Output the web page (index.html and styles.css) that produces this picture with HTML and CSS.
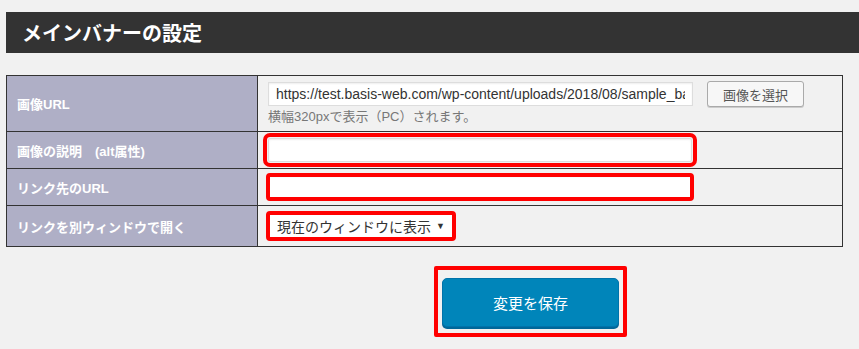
FILE: index.html
```html
<!DOCTYPE html>
<html lang="ja">
<head>
<meta charset="utf-8">
<title>メインバナーの設定</title>
<link rel="stylesheet" href="styles.css">
</head>
<body>
  <div class="wrap">
    <h2 class="section-title">メインバナーの設定</h2>

    <table class="form-table">
      <tr class="row-image">
        <th>画像URL</th>
        <td>
          <div class="url-line">
            <input type="text" class="text-url" value="https://test.basis-web.com/wp-content/uploads/2018/08/sample_banner.jpg">
            <button type="button" class="button">画像を選択</button>
          </div>
          <p class="note">横幅320pxで表示（PC）されます。</p>
        </td>
      </tr>
      <tr class="row-alt">
        <th>画像の説明　(alt属性)</th>
        <td><input type="text" class="text-wide mark mark-loose"></td>
      </tr>
      <tr class="row-link">
        <th>リンク先のURL</th>
        <td><input type="text" class="text-wide mark mark-tight"></td>
      </tr>
      <tr class="row-target">
        <th>リンクを別ウィンドウで開く</th>
        <td>
          <span class="select-box">
            <select class="mark mark-tight">
              <option>現在のウィンドウに表示</option>
              <option>別ウィンドウに表示</option>
            </select>
          </span>
        </td>
      </tr>
    </table>

    <p class="submit">
      <span class="submit-mark">
        <button type="submit" class="button-primary">変更を保存</button>
      </span>
    </p>
  </div>
</body>
</html>
```

FILE: styles.css
```css
html, body {
  margin: 0;
  background: #f1f1f1;
}
body {
  font-family: "Liberation Sans", "Noto Sans CJK JP", sans-serif;
  color: #333;
}
.wrap {
  padding: 12px 0 0 6px;
}

.section-title {
  margin: 0;
  height: 41px;
  line-height: 41px;
  padding-left: 16px;
  background: #333;
  color: #fff;
  font-family: "Noto Sans CJK JP", sans-serif;
  font-size: 20px;
  font-weight: bold;
}

.form-table {
  margin-top: 22px;
  width: 837px;
  border-collapse: collapse;
  border: 1px solid #333;
}
.form-table th,
.form-table td {
  border: 1px solid #333;
  vertical-align: middle;
}
.form-table th {
  width: 230px;
  padding: 0 10px;
  background: #afafc6;
  color: #fff;
  text-align: left;
  font-family: "Liberation Sans", "Noto Sans CJK JP", sans-serif;
  font-size: 13px;
  font-weight: bold;
}
.form-table td {
  padding: 6px 10px;
}
.row-image td {
  padding: 5px 10px;
}
.row-target td {
  height: 28px;
}

input[type="text"] {
  box-sizing: border-box;
  height: 24px;
  margin: 0;
  padding: 0 7px;
  border: 1px solid #ddd;
  background: #fff;
  box-shadow: inset 0 1px 2px rgba(0, 0, 0, 0.07);
  font-family: "Liberation Sans", "Noto Sans CJK JP", sans-serif;
  font-size: 14px;
  color: #333;
  display: block;
}

.url-line {
  display: flex;
  align-items: center;
  gap: 14px;
  height: 26px;
}
.text-url {
  width: 425px;
}
.button {
  height: 26px;
  width: 97px;
  padding: 0;
  border: 1px solid #aaa;
  border-radius: 3px;
  background: #f7f7f7;
  box-shadow: 0 1px 0 #ccc;
  font-family: "Noto Sans CJK JP", sans-serif;
  font-size: 13px;
  color: #555;
}
.note {
  margin: 1px 0 0;
  font-family: "Liberation Sans", "Noto Sans CJK JP", sans-serif;
  font-size: 13px;
  line-height: 18px;
  height: 18px;
  color: #777;
}

.text-wide {
  width: 424px;
}

/* red annotation frames */
.mark {
  outline: 4px solid #f00;
  border-radius: 2px;
}
.mark-loose {
  outline-offset: 1px;
}
.mark-tight {
  outline-offset: -2px;
}

.select-box {
  position: relative;
  display: inline-block;
  vertical-align: middle;
}
.select-box select {
  appearance: none;
  -webkit-appearance: none;
  box-sizing: border-box;
  display: block;
  width: 186px;
  height: 26px;
  margin: 0;
  padding: 0 20px 0 8px;
  border: 1px solid #ddd;
  background: #fff;
  font-family: "Noto Sans CJK JP", sans-serif;
  font-size: 14px;
  color: #333;
}
.select-box::after {
  content: "\25BC";
  position: absolute;
  right: 9px;
  top: 50%;
  transform: translateY(-50%);
  font-size: 9px;
  line-height: 1;
  color: #333;
  pointer-events: none;
}

.submit {
  margin: 19px 0 0;
  padding-left: 428px;
}
.submit-mark {
  display: inline-block;
  padding: 8px 4px 6px;
  border: 4px solid #f00;
  border-radius: 2px;
}
.button-primary {
  display: block;
  width: 177px;
  height: 49px;
  border: 1px solid #0073aa;
  border-radius: 5px;
  background: #0085ba;
  box-shadow: 0 2px 0 #006799;
  color: #fff;
  font-family: "Noto Sans CJK JP", sans-serif;
  font-size: 15px;
}
```
